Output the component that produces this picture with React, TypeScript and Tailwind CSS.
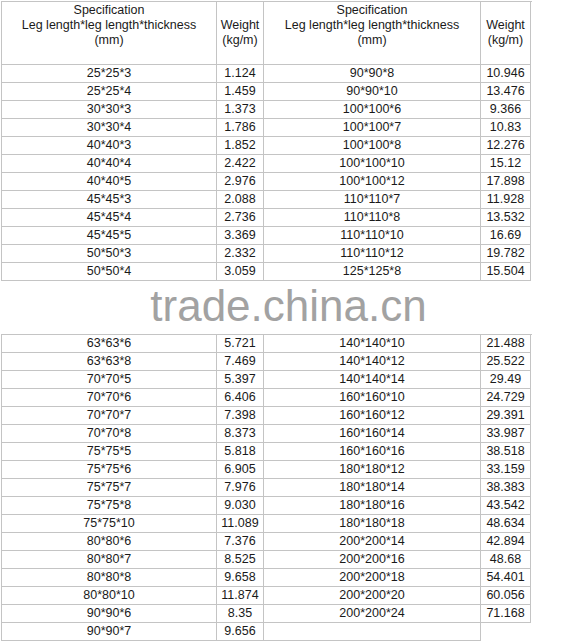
import React from "react";

type Row = [string, string, string?, string?];

const topRows: Row[] = [
  ["25*25*3", "1.124", "90*90*8", "10.946"],
  ["25*25*4", "1.459", "90*90*10", "13.476"],
  ["30*30*3", "1.373", "100*100*6", "9.366"],
  ["30*30*4", "1.786", "100*100*7", "10.83"],
  ["40*40*3", "1.852", "100*100*8", "12.276"],
  ["40*40*4", "2.422", "100*100*10", "15.12"],
  ["40*40*5", "2.976", "100*100*12", "17.898"],
  ["45*45*3", "2.088", "110*110*7", "11.928"],
  ["45*45*4", "2.736", "110*110*8", "13.532"],
  ["45*45*5", "3.369", "110*110*10", "16.69"],
  ["50*50*3", "2.332", "110*110*12", "19.782"],
  ["50*50*4", "3.059", "125*125*8", "15.504"],
];

const bottomRows: Row[] = [
  ["63*63*6", "5.721", "140*140*10", "21.488"],
  ["63*63*8", "7.469", "140*140*12", "25.522"],
  ["70*70*5", "5.397", "140*140*14", "29.49"],
  ["70*70*6", "6.406", "160*160*10", "24.729"],
  ["70*70*7", "7.398", "160*160*12", "29.391"],
  ["70*70*8", "8.373", "160*160*14", "33.987"],
  ["75*75*5", "5.818", "160*160*16", "38.518"],
  ["75*75*6", "6.905", "180*180*12", "33.159"],
  ["75*75*7", "7.976", "180*180*14", "38.383"],
  ["75*75*8", "9.030", "180*180*16", "43.542"],
  ["75*75*10", "11.089", "180*180*18", "48.634"],
  ["80*80*6", "7.376", "200*200*14", "42.894"],
  ["80*80*7", "8.525", "200*200*16", "48.68"],
  ["80*80*8", "9.658", "200*200*18", "54.401"],
  ["80*80*10", "11.874", "200*200*20", "60.056"],
  ["90*90*6", "8.35", "200*200*24", "71.168"],
  ["90*90*7", "9.656", ""],
];

const cell = "h-[18px] border-r border-b border-[#c4c4c4] text-center leading-[17px]";

const DataRow = ({ row }: { row: Row }) => (
  <div className="grid grid-cols-[216px_47px_217px_50px]">
    <div className={`${cell} border-l`}>{row[0]}</div>
    <div className={cell}>{row[1]}</div>
    <div className={cell}>{row[2]}</div>
    {row[3] !== undefined ? <div className={cell}>{row[3]}</div> : <div />}
  </div>
);

const SpecHeader = () => (
  <div className="h-[63px] border-r border-b border-[#c4c4c4] pt-[1px] text-center leading-[15px]">
    Specification
    <br />
    Leg length*leg length*thickness
    <br />
    (mm)
  </div>
);

const WeightHeader = () => (
  <div className="h-[63px] border-r border-b border-[#c4c4c4] pt-[16px] text-center leading-[15px]">
    Weight
    <br />
    (kg/m)
  </div>
);

export default function App() {
  return (
    <div
      className="w-[571px] h-[644px] bg-white pt-[1px] pl-[1px] text-[12.5px] text-[#1a1a1a]"
      style={{ fontFamily: '"Liberation Sans", Arial, sans-serif' }}
    >
      {/* upper part of the table */}
      <div className="w-[531px] border-t border-[#c4c4c4]">
        <div className="grid grid-cols-[216px_47px_217px_50px]">
          <div className="border-l border-[#c4c4c4]">
            <SpecHeader />
          </div>
          <WeightHeader />
          <SpecHeader />
          <WeightHeader />
        </div>
        {topRows.map((r) => (
          <DataRow key={r[0]} row={r} />
        ))}
      </div>

      {/* watermark band */}
      <div className="-ml-[1px] flex h-[53px] w-[571px] items-center justify-center pb-[3px] pl-[6px]">
        <span className="text-[44px] leading-none text-[#a2a2a2]">trade.china.cn</span>
      </div>

      {/* lower part of the table */}
      <div className="w-[531px] border-t border-[#c4c4c4]">
        {bottomRows.map((r) => (
          <DataRow key={r[0]} row={r} />
        ))}
      </div>
    </div>
  );
}
